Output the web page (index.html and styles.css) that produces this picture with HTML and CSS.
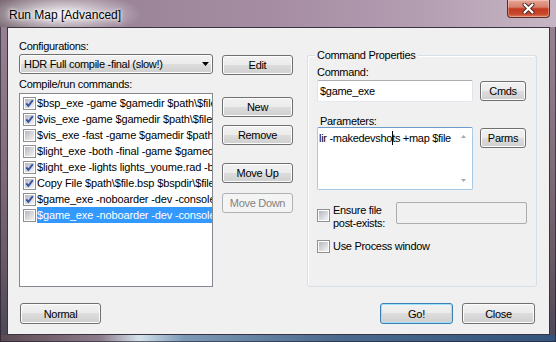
FILE: index.html
```html
<!DOCTYPE html>
<html lang="en">
<head>
    <meta charset="UTF-8">
    <title>Run Map [Advanced]</title>
    <link rel="stylesheet" href="styles.css">
</head>
<body>
    <div class="window">
        <div class="titlebar">
            <span class="title">Run Map [Advanced]</span>
            <div class="close">
                <svg width="13" height="11" viewBox="0 0 13 11">
                    <path d="M2.5 1.5 L10.5 9.5 M10.5 1.5 L2.5 9.5" stroke="#4a2a25" stroke-width="4" stroke-linecap="round"/>
                    <path d="M2.5 1.5 L10.5 9.5 M10.5 1.5 L2.5 9.5" stroke="#fff" stroke-width="2.2" stroke-linecap="round"/>
                </svg>
            </div>
        </div>

        <div class="client">
            <div class="main">
                <div class="col-left">
                    <div class="label">Configurations:</div>
                    <div class="combo">
                        <span class="combo-text">HDR Full compile -final (slow!)</span>
                        <svg width="7" height="4" viewBox="0 0 7 4"><polygon points="0,0 7,0 3.5,4" fill="#000"/></svg>
                    </div>
                    <div class="label label-commands">Compile/run commands:</div>
                    <div class="list">
                        <div class="item"><span class="chk checked"></span><span class="item-text">$bsp_exe -game $gamedir $path\$file</span></div>
                        <div class="item"><span class="chk checked"></span><span class="item-text">$vis_exe -game $gamedir $path\$file</span></div>
                        <div class="item"><span class="chk"></span><span class="item-text">$vis_exe -fast -game $gamedir $path\$file</span></div>
                        <div class="item"><span class="chk"></span><span class="item-text">$light_exe -both -final -game $gamedir $path\$file</span></div>
                        <div class="item"><span class="chk checked"></span><span class="item-text">$light_exe -lights lights_youme.rad -both -final</span></div>
                        <div class="item"><span class="chk checked"></span><span class="item-text">Copy File $path\$file.bsp $bspdir\$file.bsp</span></div>
                        <div class="item"><span class="chk checked"></span><span class="item-text">$game_exe -noboarder -dev -console -allowdebug</span></div>
                        <div class="item selected"><span class="chk"></span><span class="item-text">$game_exe -noboarder -dev -console -allowdebug</span></div>
                    </div>
                </div>

                <div class="col-buttons">
                    <button class="btn btn-edit">Edit</button>
                    <button class="btn btn-new">New</button>
                    <button class="btn btn-remove">Remove</button>
                    <button class="btn btn-up">Move Up</button>
                    <button class="btn btn-down" disabled>Move Down</button>
                </div>

                <div class="group">
                    <div class="group-title">Command Properties</div>
                    <div class="label label-command">Command:</div>
                    <div class="field-row">
                        <div class="input">$game_exe</div>
                        <button class="btn btn-side">Cmds</button>
                    </div>
                    <div class="label label-params">Parameters:</div>
                    <div class="field-row field-row-params">
                        <div class="textarea">
                            <div class="ta-text">lir -makedevsho<span class="caret"></span>ts +map $file</div>
                            <div class="ta-scroll">
                                <div class="sb-btn"><svg width="5" height="3" viewBox="0 0 5 3"><polygon points="0,3 5,3 2.5,0" fill="#a8a8a8"/></svg></div>
                                <div class="sb-btn"><svg width="5" height="3" viewBox="0 0 5 3"><polygon points="0,0 5,0 2.5,3" fill="#a8a8a8"/></svg></div>
                            </div>
                        </div>
                        <button class="btn btn-side">Parms</button>
                    </div>
                    <div class="ensure-row">
                        <span class="chk"></span>
                        <div class="chk-label ensure-label">Ensure file<br>post-exists:</div>
                        <div class="disabled-box"></div>
                    </div>
                    <div class="process-row">
                        <span class="chk"></span>
                        <div class="chk-label">Use Process window</div>
                    </div>
                </div>
            </div>

            <div class="footer">
                <button class="btn btn-footer btn-normal">Normal</button>
                <button class="btn btn-footer btn-default">Go!</button>
                <button class="btn btn-footer btn-close">Close</button>
            </div>
        </div>
    </div>
</body>
</html>
```

FILE: styles.css
```css
body {
    margin: 0;
    font-family: "Liberation Sans", Arial, sans-serif;
    font-size: 11px;
    letter-spacing: -0.3px;
    color: #000;
}

/* window frame */
.window {
    width: 556px;
    height: 342px;
    display: flex;
    flex-direction: column;
    background:
        linear-gradient(to right, #5c4a52 0%, #8c7c8a 18%, #d4e2ec 25%, #7c9ab6 33%, #4a6a8e 60%, #33547c 100%) bottom / 100% 7px no-repeat,
        linear-gradient(to bottom, #9a8597 0%, #85727f 40%, #6a5a66 75%, #4c4656 100%);
    box-shadow: inset 0 0 0 1px rgba(30, 25, 40, 0.6);
}

.titlebar {
    height: 27px;
    display: flex;
    align-items: flex-start;
    padding: 0 6px 0 9px;
    background:
        radial-gradient(ellipse 80px 22px at 62px 14px, rgba(255, 255, 255, 0.92), rgba(255, 255, 255, 0) 100%),
        linear-gradient(to right, #776570 0%, #9b8498 22%, #a68da3 50%, #b39db1 75%, #c6b6c5 100%);
}

.title {
    padding-top: 7px;
    font-size: 12px;
    line-height: 16px;
    letter-spacing: 0;
    text-shadow: 0 0 6px #fff, 0 0 3px #fff;
}

.close {
    margin-left: auto;
    width: 43px;
    height: 18px;
    box-sizing: border-box;
    border: 1px solid #5e2c24;
    border-top: none;
    border-radius: 0 0 4px 4px;
    background: linear-gradient(#e6a593 0%, #d7806b 42%, #c23a22 52%, #c8462b 82%, #de7a5e 100%);
    box-shadow: inset 0 0 0 1px rgba(255, 255, 255, 0.3);
    display: flex;
    align-items: center;
    justify-content: center;
}

.client {
    flex: 1;
    margin: 0 6px 7px 7px;
    border: 1px solid #3b3340;
    background: #f0f0f0;
    display: flex;
    flex-direction: column;
}

.main {
    display: flex;
    align-items: flex-start;
    padding: 12px 12px 0 11px;
}

.label {
    line-height: 13px;
    height: 13px;
    white-space: nowrap;
}

/* left column */
.col-left {
    width: 194px;
}

.combo {
    margin-top: 1px;
    height: 20px;
    box-sizing: border-box;
    border: 1px solid #707070;
    border-radius: 3px;
    background: linear-gradient(#f2f2f2 0%, #ebebeb 50%, #dddddd 50%, #cfcfcf 100%);
    box-shadow: inset 0 0 0 1px #fcfcfc;
    display: flex;
    align-items: center;
    padding: 0 3px 0 4px;
}

.combo-text {
    flex: 1;
    white-space: nowrap;
}

.label-commands {
    margin-top: 4px;
}

.list {
    margin-top: 2px;
    height: 194px;
    box-sizing: border-box;
    border: 1px solid #828790;
    background: #fff;
    padding-top: 1px;
    overflow: hidden;
}

.item {
    display: flex;
    align-items: center;
    height: 16px;
}

.item .chk {
    margin: 0 1px 0 3px;
}

.item-text {
    flex: 1;
    min-width: 0;
    white-space: nowrap;
    overflow: hidden;
    line-height: 16px;
    letter-spacing: -0.15px;
}

.selected .item-text {
    background: #3399ff;
    color: #fff;
}

/* checkboxes */
.chk {
    flex: none;
    position: relative;
    width: 13px;
    height: 13px;
    box-sizing: border-box;
    border: 1px solid #8f8f8f;
    padding: 1px;
    background: linear-gradient(135deg, #b4b8be, #f4f4f4) content-box, #fff;
}

.checked::after {
    content: "";
    position: absolute;
    left: 1px;
    top: 1px;
    width: 9px;
    height: 9px;
    background: url("data:image/svg+xml,%3Csvg xmlns='http://www.w3.org/2000/svg' width='9' height='9' viewBox='0 0 9 9'%3E%3Cpath d='M1.3 4.3 L3.4 6.8 L7.8 1.2' fill='none' stroke='%233b54a6' stroke-width='2'/%3E%3C/svg%3E") no-repeat;
}

/* buttons */
.btn {
    font: inherit;
    letter-spacing: inherit;
    color: #000;
    padding: 0;
    height: 20px;
    box-sizing: border-box;
    border: 1px solid #707070;
    border-radius: 3px;
    background: linear-gradient(#f2f2f2 0%, #ebebeb 50%, #dddddd 50%, #cfcfcf 100%);
    box-shadow: inset 0 0 0 1px #fcfcfc;
}

.btn:disabled {
    color: #838383;
    border-color: #adb2b5;
    background: #f4f4f4;
    box-shadow: none;
}

.col-buttons {
    width: 71px;
    margin-left: 9px;
    display: flex;
    flex-direction: column;
}

.btn-edit { margin-top: 15px; }
.btn-new { margin-top: 22px; }
.btn-remove { margin-top: 8px; }
.btn-up { margin-top: 18px; }
.btn-down { margin-top: 10px; }

/* command properties group */
.group {
    width: 230px;
    height: 232px;
    margin-left: 14px;
    margin-top: 15px;
    box-sizing: border-box;
    border: 1px solid #d5dfe5;
    border-radius: 3px;
    box-shadow: inset 1px 1px 0 #fff;
    padding-left: 9px;
}

.group-title {
    width: fit-content;
    margin: -7px 0 0 -2px;
    padding: 0 2px;
    line-height: 13px;
    background: #f0f0f0;
}

.label-command {
    margin-top: 4px;
}

.field-row {
    display: flex;
    align-items: flex-start;
    margin-top: 1px;
}

.input {
    width: 156px;
    height: 22px;
    box-sizing: border-box;
    border: 1px solid #e2e3ea;
    border-top-color: #abadb3;
    border-bottom-color: #e3e9ef;
    border-radius: 2px;
    background: #fff;
    padding: 0 2px;
    line-height: 20px;
}

.btn-side {
    width: 46px;
    margin: 1px 0 0 7px;
}

.label-params {
    margin-top: 13px;
    padding-left: 3px;
}

.field-row-params {
    margin-top: -1px;
}

.textarea {
    width: 156px;
    height: 63px;
    box-sizing: border-box;
    border: 1px solid #a7cbe6;
    border-top-color: #6b9ccb;
    border-radius: 2px;
    background: #fff;
    display: flex;
}

.ta-text {
    flex: 1;
    padding: 3px 0 0 1px;
    line-height: 13px;
    white-space: nowrap;
}

.caret {
    display: inline-block;
    width: 1px;
    height: 14px;
    margin-right: -1px;
    background: #000;
    vertical-align: -3px;
}

.ta-scroll {
    width: 17px;
    display: flex;
    flex-direction: column;
    justify-content: space-between;
}

.sb-btn {
    height: 17px;
    display: flex;
    align-items: center;
    justify-content: center;
}

.ensure-row {
    display: flex;
    align-items: flex-start;
    margin-top: 12px;
}

.ensure-row .chk {
    margin-top: 7px;
}

.chk-label {
    margin-left: 3px;
    line-height: 13px;
    white-space: nowrap;
}

.ensure-label {
    width: 63px;
    margin-top: 2px;
}

.disabled-box {
    width: 131px;
    height: 22px;
    box-sizing: border-box;
    border: 1px solid #adadad;
    border-radius: 2px;
    background: #f0f0f0;
}

.process-row {
    display: flex;
    align-items: center;
    margin-top: 10px;
}

/* bottom buttons */
.footer {
    display: flex;
    padding: 0 14px 0 12px;
    margin-top: 16px;
}

.btn-footer {
    width: 73px;
    height: 21px;
}

.btn-normal {
    width: 81px;
    margin-right: auto;
}

.btn-default {
    border-color: #3c7fb1;
    box-shadow: inset 0 0 0 1px #9ee3fb;
}

.btn-close {
    margin-left: 9px;
}
```
